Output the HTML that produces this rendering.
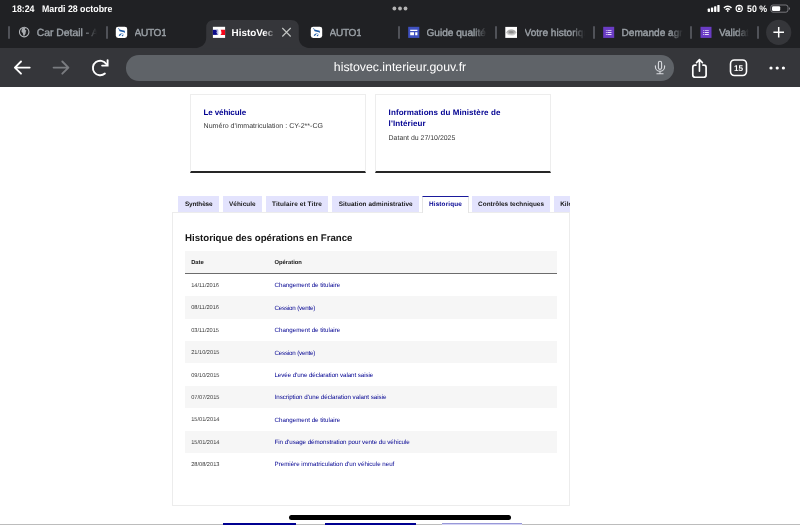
<!DOCTYPE html>
<html lang="fr">
<head>
<meta charset="utf-8">
<title>HistoVec</title>
<style>
*{box-sizing:border-box;margin:0;padding:0}
html,body{width:800px;height:525px;overflow:hidden;background:#fff}
body{text-rendering:geometricPrecision;font-family:"Liberation Sans",sans-serif;position:relative;color:#1e1e1e}
#wrap{position:absolute;left:0;top:0;width:800px;height:525px;overflow:hidden;will-change:transform}
.abs{position:absolute;white-space:nowrap}
/* chrome */
#top{position:absolute;left:0;top:0;width:800px;height:48.5px;background:#202124}
#toolbar{position:absolute;left:0;top:47.8px;width:800px;height:39.7px;background:#35363a}
.st{color:#fff;font-weight:700;font-size:9.5px;line-height:10px;transform-origin:0 50%;transform:scaleX(.925)}
.tabtxt{font-size:10.1px;line-height:14px;color:#9aa0a6;top:26.9px;overflow:hidden;-webkit-text-stroke:.38px currentColor}
.fd{-webkit-mask-image:linear-gradient(90deg,#000 calc(100% - 13px),transparent 100%);mask-image:linear-gradient(90deg,#000 calc(100% - 13px),transparent 100%)}
.sep{position:absolute;top:25.9px;width:2px;height:12.8px;background:#505258;border-radius:1px}
#pill{position:absolute;left:126px;top:55.2px;width:547.7px;height:25.6px;border-radius:12.8px;background:#5f6368}
#url{left:0;width:800px;text-align:center;top:60px;font-size:12.3px;line-height:14px;color:#fff}
.fade{position:absolute;top:24px;width:14px;height:16px}
/* page */
.card{position:absolute;top:94.2px;height:78.5px;width:175.6px;background:#fff;border:1px solid #ededed;border-bottom:2px solid #262626}
.ctitle{font-weight:700;color:#000091;font-size:8px;line-height:11px}
.csub{font-size:7.05px;line-height:9px;color:#3a3a3a}
.tab{position:absolute;top:196.3px;height:15.7px;background:#e3e3fd;font-weight:700;font-size:6.4px;line-height:17px;color:#161616;text-align:center;white-space:nowrap;overflow:hidden}
.tab.act{background:#fff;color:#000091;top:196.1px;height:16.9px;border:1px solid #e5e5e5;border-bottom:0;border-top:1.2px solid #1a1a9c;line-height:16px}
#panel{position:absolute;left:172px;top:212px;width:398px;height:294px;border:1px solid #ececec;background:#fff}
#h1{left:185px;font-size:9.66px;line-height:13px;font-weight:700;color:#161616}
.row{position:absolute;left:185px;width:371.6px;height:22.4px;font-size:6.2px;line-height:23.2px;color:#3a3a3a}
.row.hd{height:22.7px;line-height:22.6px;font-weight:700;color:#161616;border-bottom:1px solid #6c6c6c;font-size:5.8px}
.row.hd .o{color:#161616}
.row.g{background:#f6f6f6}
.row span{position:absolute;top:1.2px;white-space:nowrap}
.row.hd span{top:.8px}
.row .d{left:6.2px;font-size:5.65px}
.row.hd .d{font-size:5.8px}
.row .o{left:89.5px;color:#000091;top:.5px}
</style>
</head>
<body>
<div id="wrap">
<div id="top"></div>
<div id="toolbar"></div>

<div class="abs st" style="left:11.5px;top:4.5px">18:24</div>
<div class="abs st" style="left:42px;top:4.5px">Mardi 28 octobre</div>
<div class="abs st" style="left:746.6px;top:4.5px">50 %</div>
<svg class="abs" style="left:0;top:0" width="800" height="88" viewBox="0 0 800 88">
 <path d="M192 48.500C201 48.500 206.200 44.500 206.200 37.500V28q0-8 8-8h76.600q8 0 8 8v9.500c0 7 5.200 11 14.200 11z" fill="#35363a"/>
 <!-- top dots -->
 <g fill="#b3b3b3"><circle cx="394.4" cy="8.5" r="1.9"/><circle cx="400" cy="8.5" r="1.9"/><circle cx="405.5" cy="8.5" r="1.9"/></g>
 <!-- signal -->
 <g fill="#fff"><rect x="707.700" y="8.600" width="2.300" height="3.300" rx=".6"/><rect x="710.900" y="7.500" width="2.300" height="4.400" rx=".6"/><rect x="714.100" y="6.200" width="2.300" height="5.700" rx=".6"/><rect x="717.300" y="4.900" width="2.300" height="7" rx=".6"/></g>
 <!-- wifi -->
 <g fill="none" stroke="#fff" stroke-width="1.5" stroke-linecap="butt"><path d="M723.9 7.9a5.3 5.3 0 0 1 7.6 0"/><path d="M725.7 9.7a2.8 2.8 0 0 1 4 0"/></g>
 <circle cx="727.7" cy="11" r="0.9" fill="#fff"/>
 <!-- orientation lock -->
 <circle cx="739.200" cy="8.400" r="3.100" fill="none" stroke="#fff" stroke-width="1.200"/>
 <rect x="737.9" y="7.9" width="2.6" height="2.1" rx=".4" fill="#fff"/>
 <path d="M738.4 8v-.6a.8.8 0 0 1 1.6 0V8" fill="none" stroke="#fff" stroke-width=".6"/>
 <!-- battery -->
 <rect x="770.8" y="5" width="17.2" height="7.2" rx="2.2" fill="none" stroke="#8e8e93" stroke-width="0.8"/>
 <rect x="772" y="6.2" width="8.2" height="4.8" rx="1.2" fill="#fff"/>
 <path d="M789 7.3v2.6a1.4 1.4 0 0 0 0-2.6z" fill="#8e8e93"/>
 <!-- globe -->
 <circle cx="24.200" cy="32.100" r="4.750" fill="none" stroke="#b6b9bd" stroke-width="1.050"/>
 <path d="M21.800 28.600c1.200-.7 2.600-.9 3.900-.6l-.9 1.500 1.600 1.300-.7.900-.1 1.900-1.300 2.200-.9-.1-.6-2.700-1.300-1.200z" fill="#a9acb0"/>
 <!-- AUTO1 favicons -->
 <g><rect x="115.800" y="26.700" width="11.400" height="11.300" rx="2.400" fill="#fff"/><path d="M117.800 28.100l1.300.5.300 1 5.300 1.200.300 2.300-1.100-.9-4.300-1-.9-2zM118.700 35.500c.7-1.600 2.700-2.400 4.900-2.200l-2.100.6-1.700 2.200zM121.500 35.900l1-1.200 1.300-.2-1 1.800z" fill="#1d5aa6"/></g>
 <g transform="translate(195 0)"><rect x="115.800" y="26.700" width="11.400" height="11.300" rx="2.400" fill="#fff"/><path d="M117.800 28.100l1.300.5.300 1 5.300 1.200.300 2.300-1.100-.9-4.300-1-.9-2zM118.700 35.500c.7-1.600 2.700-2.400 4.900-2.200l-2.100.6-1.700 2.200zM121.500 35.900l1-1.200 1.300-.2-1 1.800z" fill="#1d5aa6"/></g>
 <!-- histovec favicon -->
 <rect x="212.900" y="26.800" width="12.200" height="11.100" fill="#fff"/>
 <rect x="212.900" y="29.800" width="5.200" height="5.100" fill="#0c0c8a"/>
 <path d="M220.700 29.800h4.400v5.100h-4.800c.9-.6 1.300-1.500 1.100-2.500-.1-1-.3-1.800-.7-2.600z" fill="#f5061a"/>
 <path d="M216.200 30.300l1.900-.2v4.500l-1.500.2.600-1.600-1.200-.3 1-.9z" fill="#b9bbe0"/>
 <!-- close x -->
 <path d="M282.300 28l8.400 8.500M290.700 28l-8.400 8.500" stroke="#c4c7c5" stroke-width="1.100" fill="none"/>
 <!-- sites -->
 <rect x="408.200" y="26.800" width="11.100" height="11.100" fill="#3f51c1"/>
 <path d="M410.200 29.800h7.200v1.200h-7.200z M410.200 32.300h3.800v3h-3.800z M415.200 32.300h2.200v3h-2.200z" fill="#fff"/>
 <!-- eye icon -->
 <rect x="505.300" y="26.900" width="11.700" height="11" fill="#fff"/>
 <ellipse cx="511.300" cy="32.400" rx="4.900" ry="3.200" fill="#d4d4d4"/>
 <ellipse cx="511.300" cy="32.300" rx="3.900" ry="2.100" fill="#b4b4b4"/>
 <ellipse cx="511.300" cy="32.200" rx="2.500" ry="1.100" fill="#8c8c8c"/>
 <path d="M506.600 32.600c2.200-3.300 7.200-3.300 9.400 0" stroke="#8a8a8a" stroke-width=".5" fill="none"/>
 <!-- forms -->
 <g><rect x="603.200" y="26.800" width="11" height="11.100" fill="#6a3cc4"/>
 <path d="M605.900 30.200h.8v.9h-.8zM607.400 30.200h4.100v.9h-4.100zM605.900 32.100h.8v.9h-.8zM607.400 32.100h4.100v.9h-4.100zM605.900 34h.8v.9h-.8zM607.400 34h4.100v.9h-4.100z" fill="#e9e0fa"/></g>
 <g transform="translate(97.300 0)"><rect x="603.200" y="26.800" width="11" height="11.100" fill="#6a3cc4"/>
 <path d="M605.900 30.200h.8v.9h-.8zM607.400 30.200h4.100v.9h-4.100zM605.900 32.100h.8v.9h-.8zM607.400 32.100h4.100v.9h-4.100zM605.900 34h.8v.9h-.8zM607.400 34h4.100v.9h-4.100z" fill="#e9e0fa"/></g>
 <!-- plus -->
 <circle cx="778.700" cy="32.300" r="12.600" fill="#35363a"/>
 <path d="M773.400 32.300h10.600M778.700 27v10.600" stroke="#fff" stroke-width="1.500" fill="none"/>
 <!-- back -->
 <path d="M29.700 67.600H15.200M21 61.500l-6.100 6.100 6.100 6.100" stroke="#fff" stroke-width="1.900" fill="none" stroke-linecap="round" stroke-linejoin="round"/>
 <path d="M53.600 67.600h14.500M62.300 61.500l6.100 6.100-6.100 6.100" stroke="#7a7c80" stroke-width="1.900" fill="none" stroke-linecap="round" stroke-linejoin="round"/>
 <!-- reload -->
 <path d="M106.300 64A7.300 7.300 0 1 0 104.900 73.600" stroke="#fff" stroke-width="1.900" fill="none" stroke-linecap="round"/>
 <path d="M107.600 60.100v5.500h-5.500" stroke="#fff" stroke-width="1.900" fill="none" stroke-linecap="round" stroke-linejoin="miter"/>
</svg>

<div class="sep" style="left:8.3px"></div>
<div class="tabtxt abs fd" style="left:36.700px;width:60px;font-size:10.400px">Car Detail - A</div>
<div class="sep" style="left:105.5px"></div>
<div class="tabtxt abs" style="left:134.500px;letter-spacing:-.3px">AUTO1</div>
<div class="tabtxt abs" style="left:231.600px;color:#fff;width:43px;font-weight:700;font-size:9.85px;-webkit-text-stroke:0;-webkit-mask-image:linear-gradient(90deg,#000 31.500px,transparent 44px);mask-image:linear-gradient(90deg,#000 31.500px,transparent 44px)">HistoVec</div>
<div class="tabtxt abs" style="left:329.500px;letter-spacing:-.3px">AUTO1</div>
<div class="sep" style="left:397.9px"></div>
<div class="tabtxt abs fd" style="left:426.500px;width:60px">Guide qualité</div>
<div class="sep" style="left:495.25px"></div>
<div class="tabtxt abs fd" style="left:524.500px;width:60px">Votre historique</div>
<div class="sep" style="left:593px"></div>
<div class="tabtxt abs fd" style="left:621.500px;width:61px">Demande agrément</div>
<div class="sep" style="left:690.25px"></div>
<div class="tabtxt abs fd" style="left:719px;width:30px">Validation</div>
<div class="sep" style="left:757.3px"></div>

<div id="pill"></div>
<div id="url" class="abs">histovec.interieur.gouv.fr</div>
<svg class="abs" style="left:640px;top:48px" width="160" height="40" viewBox="640 48 160 40">
 <!-- mic -->
 <rect x="658.400" y="61.300" width="3.200" height="8.100" rx="1.600" fill="none" stroke="#dadce0" stroke-width="1.100"/>
 <path d="M655.400 65.700v1a4.600 4.600 0 0 0 9.200 0v-1M660 71.500v2.200M656.900 73.800h6.200" stroke="#dadce0" stroke-width="1.100" fill="none" stroke-linecap="round"/>
 <!-- share -->
 <path d="M696 65.050h-0.900a2.300 2.300 0 0 0-2.300 2.300v7.600a2.300 2.300 0 0 0 2.300 2.300h8.700a2.300 2.300 0 0 0 2.300-2.300v-7.600a2.300 2.300 0 0 0-2.300-2.300h-0.900" stroke="#fff" stroke-width="1.700" fill="none" stroke-linecap="round"/>
 <path d="M699.450 71.200v-11.200M696.500 62.600l2.950-2.950 2.950 2.950" stroke="#fff" stroke-width="1.600" fill="none" stroke-linecap="round" stroke-linejoin="round"/>
 <!-- tab count -->
 <rect x="730.500" y="60" width="16" height="15.500" rx="3.900" fill="none" stroke="#fff" stroke-width="1.600"/>
 <text x="738.400" y="70.800" font-family="Liberation Sans, sans-serif" font-weight="700" font-size="8.200" fill="#fff" text-anchor="middle" letter-spacing="-.1">15</text>
 <g fill="#fff"><circle cx="771" cy="68" r="1.600"/><circle cx="777.200" cy="68" r="1.600"/><circle cx="783.400" cy="68" r="1.600"/></g>
</svg>

<!-- page -->
<div class="card" style="left:190.2px"></div>
<div class="card" style="left:375.2px"></div>
<div class="ctitle abs" style="left:203.5px;top:107.38px;letter-spacing:-.1px">Le véhicule</div>
<div class="csub abs" style="left:203.6px;top:122.36px">Numéro d'immatriculation : CY-2**-CG</div>
<div class="ctitle abs" style="left:388.6px;top:107.38px;letter-spacing:.09px">Informations du Ministère de<br>l'Intérieur</div>
<div class="csub abs" style="left:388.6px;top:133.6px;font-size:6.95px">Datant du 27/10/2025</div>

<div id="panel"></div>
<div class="tab" style="left:178.4px;width:40.6px;letter-spacing:-0.1px">Synthèse</div>
<div class="tab" style="left:222.6px;width:39.4px;letter-spacing:0.04px">Véhicule</div>
<div class="tab" style="left:265.6px;width:62.8px;letter-spacing:0.125px">Titulaire et Titre</div>
<div class="tab" style="left:332px;width:87.4px;letter-spacing:0.07px">Situation administrative</div>
<div class="tab act" style="left:422.3px;width:46.4px;letter-spacing:0.14px">Historique</div>
<div class="tab" style="left:471.7px;width:78.7px;letter-spacing:0.03px">Contrôles techniques</div>
<div class="tab" style="left:554px;width:15.6px;text-align:left;padding-left:6.2px;letter-spacing:0.05px">Kilométrage</div>

<div id="h1" class="abs" style="top:232.15px">Historique des opérations en France</div>
<div class="row g hd" style="top:251.3px"><span class="d">Date</span><span class="o">Opération</span></div>
<div class="row" style="top:273.9px"><span class="d">14/11/2016</span><span class="o">Changement de titulaire</span></div>
<div class="row g" style="top:296.27px"><span class="d">08/11/2016</span><span class="o" style="letter-spacing:-0.18px">Cession (vente)</span></div>
<div class="row" style="top:318.65px"><span class="d">03/11/2015</span><span class="o">Changement de titulaire</span></div>
<div class="row g" style="top:341.02px"><span class="d">21/10/2015</span><span class="o" style="letter-spacing:-0.18px">Cession (vente)</span></div>
<div class="row" style="top:363.4px"><span class="d">09/10/2015</span><span class="o" style="letter-spacing:-0.07px">Levée d'une déclaration valant saisie</span></div>
<div class="row g" style="top:385.77px"><span class="d">07/07/2015</span><span class="o" style="letter-spacing:-0.015px">Inscription d'une déclaration valant saisie</span></div>
<div class="row" style="top:408.15px"><span class="d">15/01/2014</span><span class="o">Changement de titulaire</span></div>
<div class="row g" style="top:430.52px"><span class="d">15/01/2014</span><span class="o" style="letter-spacing:-0.03px">Fin d'usage démonstration pour vente du véhicule</span></div>
<div class="row" style="top:452.9px"><span class="d">28/08/2013</span><span class="o">Première immatriculation d'un véhicule neuf</span></div>

<div style="position:absolute;left:0;top:523.6px;width:800px;height:1.4px;background:#bcbcbc"></div>
<div style="position:absolute;left:223.4px;top:523.2px;width:72.6px;height:1.8px;background:#000091"></div>
<div style="position:absolute;left:325px;top:523.2px;width:91px;height:1.8px;background:#000091"></div>
<div style="position:absolute;left:442px;top:523.2px;width:79.5px;height:1.8px;background:#d5d5f5;border-top:.8px solid #9898d8"></div>
<div style="position:absolute;left:289px;top:515.4px;width:222px;height:4.6px;border-radius:3px;background:#000"></div>
</div>
</body>
</html>
